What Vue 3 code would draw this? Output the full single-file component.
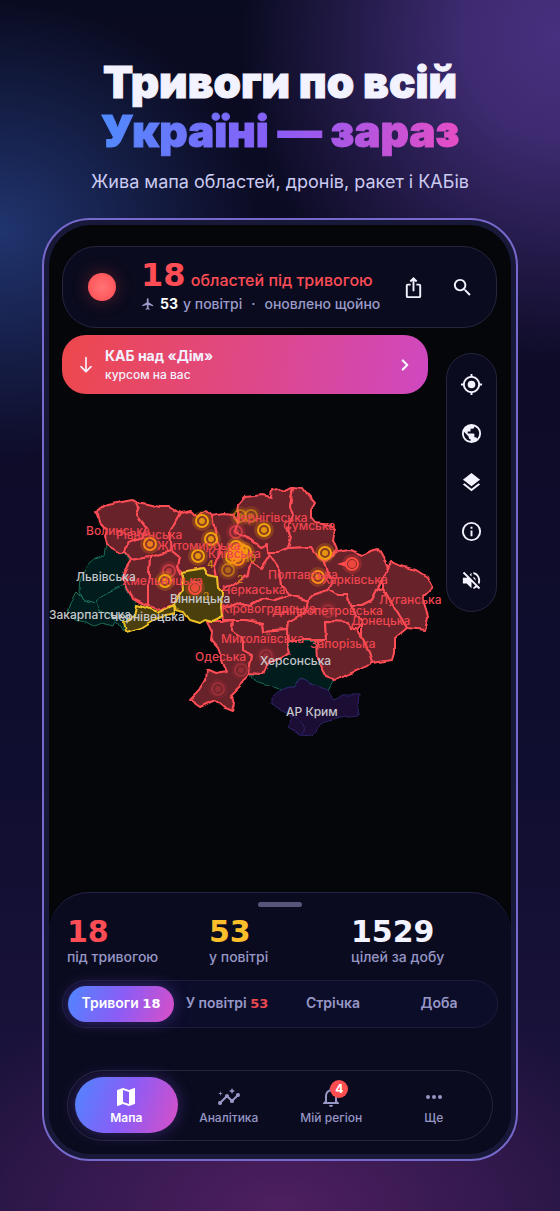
<template>
	<main class="page">
		<header class="hero">
			<h1 class="title">Тривоги по всій<br><span class="accent">Україні — зараз</span></h1>
			<p class="subtitle">Жива мапа областей, дронів, ракет і КАБів</p>
		</header>

		<div class="phone">
			<div class="screen">
				<section class="stage">
					<svg class="map" viewBox="0 0 462 667" role="img" aria-label="Мапа тривог">
						<defs>
							<filter id="rough" x="0" y="0" width="1" height="1">
								<feTurbulence type="fractalNoise" baseFrequency="0.09" numOctaves="1" seed="4" />
								<feDisplacementMap in="SourceGraphic" scale="6" xChannelSelector="R" yChannelSelector="G" />
							</filter>
						</defs>
						<g transform="translate(-49 -225)">
							<g filter="url(#rough)">
								<polygon v-for="region in regions" :key="region.name" :points="region.points"
									:class="['region', region.state]" />
								<polyline class="region-line" points="292,715 299,719 304,725 302,736" />
							</g>
							<g v-for="(mark, index) in marks" :key="index" :class="['mark', mark[2]]">
								<circle class="halo" :cx="mark[0]" :cy="mark[1]" r="10" />
								<circle class="ring" :cx="mark[0]" :cy="mark[1]" r="6" />
								<circle class="core" :cx="mark[0]" :cy="mark[1]" r="3" />
							</g>
							<path class="trail" d="M337 564 347 561 347 567z" />
							<text v-for="count in counts" :key="count[0]" class="count" :x="count[0]" :y="count[1]">{{ count[2] }}</text>
							<text v-for="label in labels" :key="label[2]" :class="['label', label[3]]" :x="label[0]" :y="label[1]">{{ label[2] }}</text>
						</g>
					</svg>

					<div class="overlay">
						<div class="status">
							<span class="pulse"></span>
							<div class="status-text">
								<div class="alerts"><b class="wide">18</b> областей під тривогою</div>
								<div class="air">
									<svg viewBox="0 0 24 24"><path :d="icons.plane" /></svg>
									<b>53</b> у повітрі <span class="sep">·</span> оновлено щойно
								</div>
							</div>
							<button class="icon-btn" aria-label="Поділитися"><svg viewBox="0 0 24 24"><path :d="icons.share" /></svg></button>
							<button class="icon-btn" aria-label="Пошук"><svg viewBox="0 0 24 24"><path :d="icons.search" /></svg></button>
						</div>
						<div class="controls">
							<button class="banner">
								<svg class="arrow" viewBox="0 0 24 24"><path d="M12 3v17M6 14l6 6 6-6" /></svg>
								<span class="banner-text"><strong>КАБ над «Дім»</strong><span>курсом на вас</span></span>
								<svg class="chevron" viewBox="0 0 24 24"><path d="M9 6l6 6-6 6" /></svg>
							</button>
							<div class="tools">
								<button v-for="tool in tools" :key="tool.icon" class="tool" :aria-label="tool.label">
									<svg viewBox="0 0 24 24"><path :d="icons[tool.icon]" /></svg>
								</button>
							</div>
						</div>
					</div>
				</section>

				<section class="sheet">
					<div class="handle"></div>
					<div class="stats">
						<div v-for="stat in stats" :key="stat.label">
							<div :class="['wide', 'value', stat.color]">{{ stat.value }}</div>
							<div class="caption">{{ stat.label }}</div>
						</div>
					</div>
					<div class="tabs">
						<button v-for="tab in tabs" :key="tab.name" :class="['tab', { active: selectedTab === tab.name }]"
							@click="selectedTab = tab.name">
							{{ tab.name }} <b v-if="tab.count" class="wide">{{ tab.count }}</b>
						</button>
					</div>
					<nav class="nav">
						<a v-for="item in navItems" :key="item.name" href="#" :class="['nav-item', { active: selectedPage === item.name }]"
							@click.prevent="selectedPage = item.name">
							<span class="nav-icon">
								<svg viewBox="0 0 24 24"><path :d="icons[item.icon]" /></svg>
								<span v-if="item.badge" class="badge">{{ item.badge }}</span>
							</span>
							{{ item.name }}
						</a>
					</nav>
				</section>
			</div>
		</div>
	</main>
</template>

<script setup>
import { ref } from 'vue';

const selectedTab = ref('Тривоги');
const selectedPage = ref('Мапа');

const stats = [
	{ value: '18', label: 'під тривогою', color: 'red' },
	{ value: '53', label: 'у повітрі', color: 'yellow' },
	{ value: '1529', label: 'цілей за добу', color: 'white' },
];

const tabs = [
	{ name: 'Тривоги', count: 18 },
	{ name: 'У повітрі', count: 53 },
	{ name: 'Стрічка' },
	{ name: 'Доба' },
];

const navItems = [
	{ name: 'Мапа', icon: 'map' },
	{ name: 'Аналітика', icon: 'insights' },
	{ name: 'Мій регіон', icon: 'bell', badge: 4 },
	{ name: 'Ще', icon: 'more' },
];

const tools = [
	{ icon: 'locate', label: 'Моє місце' },
	{ icon: 'globe', label: 'Світ' },
	{ icon: 'layers', label: 'Шари' },
	{ icon: 'info', label: 'Інформація' },
	{ icon: 'mute', label: 'Без звуку' },
];

const icons = {
	plane: 'M21 16v-2l-8-5V3.5a1.5 1.5 0 0 0-3 0V9l-8 5v2l8-2.5V19l-2 1.5V22l3.5-1 3.5 1v-1.5L13 19v-5.5z',
	share: 'M16 5l-1.42 1.42-1.59-1.59V16h-1.98V4.83L9.42 6.42 8 5l4-4zM20 10v11a2 2 0 0 1-2 2H6a2 2 0 0 1-2-2V10c0-1.11.89-2 2-2h3v2H6v11h12V10h-3V8h3a2 2 0 0 1 2 2z',
	search: 'M15.5 14h-.79l-.28-.27C15.41 12.59 16 11.11 16 9.5 16 5.91 13.09 3 9.5 3S3 5.91 3 9.5 5.91 16 9.5 16c1.61 0 3.09-.59 4.23-1.57l.27.28v.79l5 4.99L20.49 19zm-6 0C7.01 14 5 11.99 5 9.5S7.01 5 9.5 5 14 7.01 14 9.5 11.99 14 9.5 14z',
	locate: 'M12 8a4 4 0 1 0 0 8 4 4 0 0 0 0-8zm8.94 3A8.99 8.99 0 0 0 13 3.06V1h-2v2.06A8.99 8.99 0 0 0 3.06 11H1v2h2.06A8.99 8.99 0 0 0 11 20.94V23h2v-2.06A8.99 8.99 0 0 0 20.94 13H23v-2zM12 19a7 7 0 1 1 0-14 7 7 0 0 1 0 14z',
	globe: 'M12 2a10 10 0 1 0 0 20 10 10 0 0 0 0-20zm-1 17.93A8 8 0 0 1 4.21 10.21L9 15v1a2 2 0 0 0 2 2zm6.9-2.54A2 2 0 0 0 16 16h-1v-3a1 1 0 0 0-1-1H8v-2h2a1 1 0 0 0 1-1V7h2a2 2 0 0 0 2-2v-.41a8 8 0 0 1 2.9 12.8z',
	layers: 'M11.99 18.54l-7.37-5.73L3 14.07l9 7 9-7-1.63-1.27zM12 16l7.36-5.73L21 9l-9-7-9 7 1.63 1.27z',
	info: 'M11 7h2v2h-2zm0 4h2v6h-2zm1-9a10 10 0 1 0 0 20 10 10 0 0 0 0-20zm0 18a8 8 0 1 1 0-16 8 8 0 0 1 0 16z',
	mute: 'M4.34 2.93L2.93 4.34 7.29 8.7 7 9H3v6h4l5 5v-6.59l4.18 4.18c-.65.49-1.38.88-2.18 1.11v2.06a8.94 8.94 0 0 0 3.61-1.75l2.05 2.05 1.41-1.41zM19 12c0 .82-.15 1.61-.41 2.34l1.53 1.53A8.99 8.99 0 0 0 14 3.23v2.06A7 7 0 0 1 19 12zm-7-8l-1.88 1.88L12 7.76zm4.5 8A4.5 4.5 0 0 0 14 7.97v1.79l2.48 2.48.02-.24z',
	map: 'M20.5 3l-.16.03L15 5.1 9 3 3.36 4.9a.5.5 0 0 0-.36.48V20.5a.5.5 0 0 0 .66.47L9 18.9l6 2.1 5.64-1.9a.5.5 0 0 0 .36-.48V3.5a.5.5 0 0 0-.5-.5zM15 19l-6-2.11V5l6 2.11z',
	insights: 'M21 8a2 2 0 0 0-1.93 2.51l-3.55 3.56a2 2 0 0 0-1.04 0l-2.55-2.55A2 2 0 0 0 10 9a2 2 0 0 0-1.93 2.52l-4.56 4.55A2 2 0 1 0 4.93 17.48l4.56-4.55c.33.09.69.09 1.02 0l2.55 2.55a2 2 0 1 0 3.87 0l3.56-3.55A2 2 0 1 0 21 8zM15 9l.94-2.07L18 6l-2.06-.93L15 3l-.92 2.07L12 6l2.08.93zM3.5 11L4 9l2-.5L4 8l-.5-2L3 8l-2 .5L3 9z',
	bell: 'M12 22a2 2 0 0 0 2-2h-4a2 2 0 0 0 2 2zm6-6v-5c0-3.07-1.63-5.64-4.5-6.32V4a1.5 1.5 0 0 0-3 0v.68C7.64 5.36 6 7.92 6 11v5l-2 2v1h16v-1zm-2 1H8v-6c0-2.48 1.51-4.5 4-4.5s4 2.02 4 4.5z',
	more: 'M6 10a2 2 0 1 0 0 4 2 2 0 0 0 0-4zm12 0a2 2 0 1 0 0 4 2 2 0 0 0 0-4zm-6 0a2 2 0 1 0 0 4 2 2 0 0 0 0-4z',
};

// calm regions go first so that alert borders stay on top
const regions = [
	{ name: 'lviv', state: 'calm', points: '107,545 120,553 125,553 130,562 122,575 124,585 115,590 108,592 98,598 96,603 85,600 79,592 80,577 87,565 95,558 105,555' },
	{ name: 'zakarpattia', state: 'calm', points: '77,592 85,600 96,603 99,611 108,612 116,622 114,627 102,624 95,627 86,622 75,620 67,612 70,603' },
	{ name: 'frankivsk', state: 'calm', points: '124,585 108,592 98,598 96,603 99,611 108,612 116,622 123,632 123,622 135,617 137,605 133,598' },
	{ name: 'kherson', state: 'calm', points: '288,640 317,642 318,660 327,677 335,680 330,687 328,691 317,687 300,678 295,687 280,689 255,682 250,674 263,674 267,665 280,658 290,653' },
	{ name: 'crimea', state: 'occupied', points: '272,697 283,688 295,687 300,678 313,685 328,690 333,700 343,695 360,695 358,715 340,717 323,722 313,735 302,736 289,728 292,715 272,705' },
	{ name: 'volyn', state: 'alert', points: '96,511 107,505 132,500 138,502 140,508 137,515 147,528 142,537 128,542 125,552 120,553 107,545 105,538 107,530 100,522 98,513' },
	{ name: 'rivne', state: 'alert', points: '138,502 160,507 170,507 180,513 174,524 170,532 172,551 160,556 150,557 131,560 125,552 128,542 142,537 147,528 137,515 140,508' },
	{ name: 'zhytomyr', state: 'alert', points: '180,513 191,511 194,514 198,517 202,514 207,511 212,516 215,530 220,553 215,567 217,577 207,575 203,568 182,572 177,567 179,557 172,551 170,532 174,524' },
	{ name: 'khmelnytskyi', state: 'alert', points: '172,551 179,557 177,567 182,577 183,590 176,600 173,605 167,607 158,609 149,606 149,570 150,557' },
	{ name: 'ternopil', state: 'alert', points: '150,557 149,570 149,606 143,604 133,599 129,590 122,580 125,570 131,560' },
	{ name: 'kyiv', state: 'alert', points: '212,516 217,515 225,514 233,515 238,522 235,530 243,536 252,540 260,547 267,544 270,555 262,568 250,561 247,575 232,585 220,592 218,588 217,577 215,567 220,553 215,530' },
	{ name: 'chernihiv', state: 'alert', points: '238,505 245,497 263,495 272,497 273,488 283,492 293,487 290,507 293,513 288,530 291,538 288,548 278,552 268,552 267,544 260,547 252,540 243,536 235,530 238,522 237,513' },
	{ name: 'sumy', state: 'alert', points: '293,487 303,488 308,495 315,503 311,510 311,518 315,523 330,525 335,530 333,540 337,550 325,562 319,558 312,547 288,548 291,538 288,530 293,513 290,507' },
	{ name: 'poltava', state: 'alert', points: '268,552 278,552 288,548 312,547 319,558 325,562 328,572 332,580 328,590 313,595 307,601 300,598 290,595 282,585 280,570 270,555' },
	{ name: 'cherkasy', state: 'alert', points: '270,555 280,570 282,585 290,595 275,600 263,598 250,605 240,603 228,608 221,607 220,592 232,585 247,575 250,561 262,568' },
	{ name: 'kirovohrad', state: 'alert', points: '221,607 228,608 240,603 250,605 263,598 275,600 290,595 300,598 307,601 305,612 297,617 288,622 287,630 263,632 262,623 245,620 233,620 223,620' },
	{ name: 'odesa', state: 'alert', points: '207,622 222,622 233,620 232,630 243,637 243,650 252,655 249,673 242,683 230,695 235,703 233,711 223,707 215,700 200,707 190,700 197,693 205,680 206,670 215,674 227,672 223,663 217,647 211,640 212,632' },
	{ name: 'mykolaiv', state: 'alert', points: '233,620 245,620 262,623 263,632 287,630 287,643 290,653 280,658 267,665 263,674 249,673 252,655 243,650 243,637 232,630' },
	{ name: 'kharkiv', state: 'alert', points: '325,562 338,552 350,550 362,555 378,549 388,567 383,580 377,590 372,600 362,605 350,605 347,595 337,595 328,590 332,580 328,572' },
	{ name: 'luhansk', state: 'alert', points: '392,562 403,567 417,570 428,577 433,587 423,597 428,617 425,630 407,628 398,613 388,597 383,588 383,580 388,567' },
	{ name: 'donetsk', state: 'alert', points: '383,588 388,597 398,613 407,628 395,638 395,653 393,660 372,663 368,650 362,637 362,623 355,613 350,605 362,605 372,600 377,590' },
	{ name: 'dnipro', state: 'alert', points: '313,595 328,590 337,595 347,595 350,605 355,613 362,623 358,630 350,628 348,622 325,621 326,640 300,640 288,640 287,630 288,622 297,617 305,612 307,601' },
	{ name: 'zaporizhzhia', state: 'alert', points: '325,621 348,622 350,628 358,630 362,637 368,650 372,663 360,670 347,675 335,680 327,677 318,660 317,640 326,640' },
	{ name: 'chernivtsi', state: 'warning', points: '137,605 148,608 158,612 173,605 174,613 158,617 148,623 140,628 125,632 123,622 135,617' },
	{ name: 'vinnytsia', state: 'warning', points: '182,572 203,568 207,575 217,577 218,588 222,592 221,607 222,617 212,622 205,620 200,623 190,620 184,612 175,610 173,605 183,591' },
];

const marks = [
	[202, 521, 'drone'], [211, 539, 'drone'], [198, 556, 'drone'], [150, 544, 'orange'],
	[169, 571, 'rocket'], [165, 581, 'drone'], [195, 588, 'hot'], [240, 516, 'faded'],
	[251, 516, 'faded'], [264, 530, 'drone'], [236, 532, 'rocket'], [236, 547, 'drone'],
	[241, 550, 'orange'], [245, 552, 'drone'], [232, 557, 'drone'], [238, 559, 'orange'],
	[236, 553, 'orange'], [228, 570, 'faded'], [325, 553, 'drone'], [318, 577, 'orange'],
	[352, 564, 'hot'], [328, 611, 'dim'], [266, 656, 'dim'], [241, 670, 'dim'], [218, 689, 'dim'],
];

const counts = [[207, 568, '4'], [237, 583, '2'], [245, 562, '10'], [203, 600, '2']];

const labels = [
	[86, 535, 'Волинська', 'danger'],
	[116, 539, 'Рівненська', 'danger'],
	[157, 550, 'Житомирська', 'danger'],
	[208, 558, 'Київська', 'danger'],
	[232, 522, 'Чернігівська', 'danger'],
	[283, 530, 'Сумська', 'danger'],
	[268, 579, 'Полтавська', 'danger'],
	[322, 584, 'Харківська', 'danger'],
	[379, 604, 'Луганська', 'danger'],
	[351, 625, 'Донецька', 'danger'],
	[310, 648, 'Запорізька', 'danger'],
	[272, 615, 'Дніпропетровська', 'danger'],
	[221, 613, 'Кіровоградська', 'danger'],
	[222, 594, 'Черкаська', 'danger'],
	[122, 585, 'Хмельницька', 'danger'],
	[221, 643, 'Миколаївська', 'danger'],
	[195, 661, 'Одеська', 'danger'],
	[170, 603, 'Вінницька'],
	[76, 581, 'Львівська'],
	[49, 619, 'Закарпатська'],
	[110, 621, 'Чернівецька'],
	[260, 665, 'Херсонська'],
	[286, 716, 'АР Крим'],
];
</script>

<style>
body {
	margin: 0;
	background-color: #0d0c26;
}
</style>

<style scoped>
.page {
	box-sizing: border-box;
	min-height: 100vh;
	padding: 58px 42px 50px;
	font-family: Inter, "Noto Sans", sans-serif;
	font-weight: 500;
	color: #f3f2ff;
	background:
		radial-gradient(320px 330px at 100% 3%, #47307f 0%, rgba(71, 48, 127, 0.85) 30%, rgba(71, 48, 127, 0) 100%),
		radial-gradient(260px 230px at 0% 19%, #20346e 0%, rgba(32, 52, 110, 0) 100%),
		radial-gradient(380px 240px at 50% 100%, #4e1f60 0%, rgba(78, 31, 96, 0) 100%),
		linear-gradient(#090b20 0%, #0d0b26 30%, #100e30 65%, #1f1440 100%);
}

button {
	border: 0;
	padding: 0;
	background: none;
	font: inherit;
	color: inherit;
	cursor: pointer;
}

svg {
	display: block;
	fill: currentColor;
}

.hero {
	text-align: center;
}

.title {
	margin: 0;
	font-size: 44px;
	line-height: 49px;
	font-weight: 900;
	white-space: nowrap;
	-webkit-text-stroke: 1px;
}

.accent {
	color: transparent;
	background: linear-gradient(100deg, #4f8cff, #8b5cf6 50%, #e84dc4);
	background-clip: text;
}

.subtitle {
	margin: 14px 0 24px;
	font-size: 18px;
	line-height: 24px;
	font-weight: 400;
	color: #cbcaf0;
}

.wide {
	font-family: "DejaVu Sans", sans-serif;
	font-weight: 700;
}

.phone {
	border: 2px solid #7669cb;
	border-radius: 48px;
	padding: 5px;
	background-color: #181838;
}

.screen {
	overflow: hidden;
	border-radius: 42px;
	background-color: #04060a;
}

.stage {
	display: grid;
}

.map,
.overlay {
	grid-area: 1 / 1;
}

.map {
	width: 100%;
}

.region {
	stroke-width: 1;
	stroke-linejoin: round;
}

.alert {
	fill: #67212a;
	stroke: #ff4d56;
	stroke-width: 2;
}

.calm {
	fill: #061b1a;
	stroke: #176b55;
}

.warning {
	fill: #4b410b;
	stroke: #eec027;
	stroke-width: 2;
}

.occupied {
	fill: #1a0d36;
	stroke: #2d2266;
}

.region-line {
	fill: none;
	stroke: #2d2266;
}

.mark {
	color: #f5a30c;
}

.mark.orange {
	color: #ff8a1c;
}

.mark.rocket {
	color: #f5464e;
	opacity: 0.7;
}

.mark.hot {
	color: #ff4b3e;
}

.mark.faded {
	opacity: 0.6;
}

.mark.dim {
	color: #e8404a;
	opacity: 0.4;
}

.halo {
	fill: currentColor;
	opacity: 0.22;
}

.ring {
	fill: none;
	stroke: currentColor;
	stroke-width: 2;
}

.core {
	fill: currentColor;
	opacity: 0.85;
}

.hot .core {
	r: 4px;
}

.trail {
	fill: #ff4b4b;
}

.count {
	font-size: 10px;
	font-weight: 600;
	fill: #c98112;
}

.label {
	font-size: 12px;
	fill: #c6c7cb;
}

.label.danger {
	fill: #f0464f;
}

.overlay {
	padding: 21px 14px 0 13px;
}

.status {
	display: flex;
	align-items: center;
	box-sizing: border-box;
	height: 82px;
	padding: 0 9px 0 25px;
	border: 1px solid #25263e;
	border-radius: 34px;
	background-color: #0a0b1e;
}

.pulse {
	width: 28px;
	height: 28px;
	margin-right: 25px;
	border-radius: 50%;
	background: radial-gradient(#ff7376, #ff4b50);
	box-shadow: 0 0 18px rgba(255, 77, 80, 0.3);
}

.status-text {
	flex: 1;
	white-space: nowrap;
}

.alerts {
	font-size: 16px;
	line-height: 28px;
	color: #ff4d56;
}

.alerts b {
	margin-right: 1px;
	font-size: 32px;
}

.air {
	display: flex;
	align-items: center;
	gap: 5px;
	font-size: 14px;
	line-height: 20px;
	color: #9b9bca;
}

.air svg {
	width: 14px;
	height: 14px;
}

.air b {
	color: #fff;
}

.sep {
	margin: 0 4px;
}

.icon-btn {
	display: grid;
	place-items: center;
	width: 49px;
	height: 49px;
}

.icon-btn svg,
.tool svg {
	width: 23px;
	height: 23px;
}

.controls {
	display: flex;
	align-items: flex-start;
	gap: 18px;
	margin-top: 7px;
}

.banner {
	flex: 1;
	display: flex;
	align-items: center;
	height: 59px;
	padding: 0 14px;
	border-radius: 24px;
	background: linear-gradient(100deg, #ee484c, #cf48c0);
	text-align: left;
}

.banner-text {
	flex: 1;
	display: grid;
	margin-left: 9px;
	font-size: 12px;
	line-height: 19px;
}

.banner-text strong {
	font-size: 14px;
	font-weight: 700;
}

.arrow,
.chevron {
	width: 20px;
	height: 20px;
	fill: none;
	stroke: currentColor;
	stroke-width: 2;
	stroke-linecap: round;
	stroke-linejoin: round;
}

.chevron {
	width: 18px;
	height: 18px;
	stroke-width: 3;
}

.tools {
	display: grid;
	margin-top: 18px;
	padding: 6px 0;
	border: 1px solid #25263e;
	border-radius: 26px;
	background-color: #0a0b1e;
}

.tool {
	display: grid;
	place-items: center;
	width: 49px;
	height: 49px;
}

.sheet {
	padding: 9px 13px 13px;
	border-top: 1px solid #24254a;
	border-radius: 40px 40px 0 0;
	background-color: #0a0b1f;
}

.handle {
	width: 44px;
	height: 5px;
	margin: 0 auto;
	border-radius: 3px;
	background-color: #56567b;
}

.stats {
	display: grid;
	grid-template-columns: repeat(3, 1fr);
	padding: 9px 5px 0;
}

.value {
	font-size: 30px;
	line-height: 32px;
}

.red {
	color: #ff4d56;
}

.yellow {
	color: #fbbf2c;
}

.caption {
	font-size: 14px;
	line-height: 18px;
	color: #9797c6;
}

.tabs {
	display: grid;
	grid-template-columns: repeat(4, 1fr);
	margin-top: 14px;
	padding: 5px;
	border: 1px solid #1b1c3c;
	border-radius: 24px;
	background-color: #0c0d29;
}

.tab {
	height: 36px;
	padding-bottom: 3px;
	border-radius: 18px;
	font-size: 14px;
	font-weight: 600;
	white-space: nowrap;
	color: #9797c6;
}

.tab b {
	font-size: 13px;
	color: #e8484f;
}

.active {
	background: linear-gradient(110deg, #4f86ff, #8b5cf6 50%, #d94fc6);
	box-shadow: 0 0 16px rgba(139, 92, 246, 0.35);
}

.tab.active,
.tab.active b,
.nav-item.active {
	color: #fff;
}

.nav {
	display: grid;
	grid-template-columns: repeat(4, 1fr);
	margin: 42px 5px 0;
	padding: 6px 7px 7px;
	border: 1px solid #25263e;
	border-radius: 36px;
}

.nav-item {
	display: grid;
	justify-items: center;
	align-content: center;
	height: 56px;
	border-radius: 28px;
	font-size: 12px;
	line-height: 17px;
	text-decoration: none;
	color: #9797c6;
}

.nav-item.active {
	font-weight: 600;
}

.nav-icon {
	position: relative;
}

.nav-icon svg {
	width: 24px;
	height: 24px;
}

.badge {
	position: absolute;
	top: -5px;
	left: 11px;
	width: 18px;
	border-radius: 9px;
	background-color: #ff4d50;
	font-size: 12px;
	line-height: 18px;
	font-weight: 700;
	text-align: center;
	color: #fff;
}
</style>
